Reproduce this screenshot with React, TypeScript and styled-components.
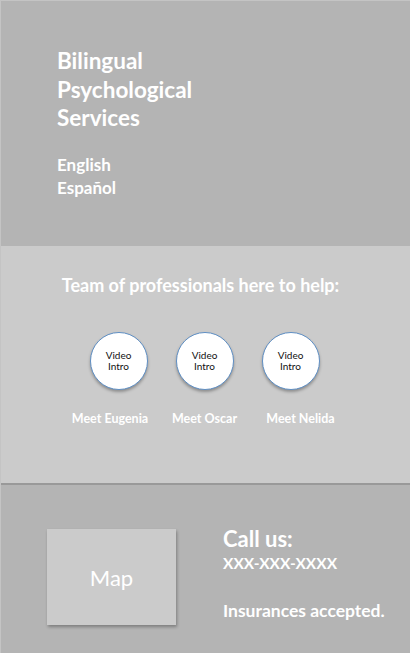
import React from "react";
import styled, { createGlobalStyle } from "styled-components";

const Global = createGlobalStyle`
  html, body { margin: 0; padding: 0; background: #b4b4b4; }
  body { font-family: Lato, "Open Sans", sans-serif; }
`;

const Page = styled.div`
  width: 410px;
  height: 653px;
  display: flex;
  flex-direction: column;
  overflow: hidden;
  border-top: 1px solid #c4c4c4;
  border-left: 1px solid #c4c4c4;
  box-sizing: border-box;
`;

const Hero = styled.header`
  height: 245px;
  flex-shrink: 0;
  background: #b4b4b4;
  padding: 46px 0 0 56px;
  box-sizing: border-box;
  color: #ffffff;
`;

const Title = styled.h1`
  margin: 0;
  font-size: 22.5px;
  line-height: 28.5px;
  font-weight: 700;
  width: 170px;
`;

const LangList = styled.div`
  margin-top: 20px;
  display: flex;
  flex-direction: column;
`;

const Lang = styled.span`
  font-size: 17px;
  line-height: 23px;
  font-weight: 700;
`;

const Team = styled.section`
  height: 239px;
  flex-shrink: 0;
  background: #cbcbcb;
  border-bottom: 2px solid #999999;
  box-sizing: border-box;
  display: flex;
  flex-direction: column;
  align-items: center;
  padding-top: 28px;
  color: #ffffff;
`;

const TeamTitle = styled.h2`
  margin: 0 0 0 -10px;
  font-size: 18px;
  line-height: 22px;
  font-weight: 700;
`;

const Members = styled.div`
  margin-top: 36px;
  display: flex;
  margin-left: -2px;
`;

const Member = styled.div`
  width: 86px;
  display: flex;
  flex-direction: column;
  align-items: center;
`;

const Circle = styled.div`
  width: 56px;
  height: 56px;
  border-radius: 50%;
  background: #ffffff;
  border: 1.5px solid #5f8fc4;
  box-shadow: 0 2px 3px rgba(0, 0, 0, 0.3);
  display: flex;
  align-items: center;
  justify-content: center;
  text-align: center;
  color: #111;
  font-size: 10px;
  line-height: 11px;
`;

const MemberName = styled.span<{ $shift: number }>`
  margin-top: 21px;
  margin-left: ${(p) => p.$shift}px;
  font-size: 12.5px;
  font-weight: 700;
  white-space: nowrap;
`;

const Contact = styled.footer`
  flex: 1;
  background: #b4b4b4;
  display: flex;
  align-items: flex-start;
  padding: 44px 0 0 46px;
  box-sizing: border-box;
  color: #ffffff;
`;

const MapBox = styled.div`
  width: 129px;
  height: 96px;
  background: #cbcbcb;
  box-shadow: 1px 2px 3px rgba(0, 0, 0, 0.3);
  display: flex;
  align-items: center;
  justify-content: center;
  font-size: 22px;
`;

const Info = styled.div`
  margin-left: 47px;
  margin-top: -2px;
  display: flex;
  flex-direction: column;
`;

const CallTitle = styled.span`
  font-size: 22px;
  line-height: 24px;
  font-weight: 700;
`;

const Phone = styled.span`
  font-size: 15.5px;
  line-height: 22px;
  margin-top: 1px;
  font-weight: 700;
`;

const Note = styled.span`
  margin-top: 26px;
  font-size: 17.5px;
  line-height: 22px;
  font-weight: 700;
`;

const members = [
  { name: "Meet Eugenia", shift: -17 },
  { name: "Meet Oscar", shift: 0 },
  { name: "Meet Nelida", shift: 20 },
];

export default function App() {
  return (
    <>
      <Global />
      <Page>
        <Hero>
          <Title>Bilingual Psychological Services</Title>
          <LangList>
            <Lang>English</Lang>
            <Lang>Español</Lang>
          </LangList>
        </Hero>
        <Team>
          <TeamTitle>Team of professionals here to help:</TeamTitle>
          <Members>
            {members.map((m) => (
              <Member key={m.name}>
                <Circle>
                  Video
                  <br />
                  Intro
                </Circle>
                <MemberName $shift={m.shift}>{m.name}</MemberName>
              </Member>
            ))}
          </Members>
        </Team>
        <Contact>
          <MapBox>Map</MapBox>
          <Info>
            <CallTitle>Call us:</CallTitle>
            <Phone>XXX-XXX-XXXX</Phone>
            <Note>Insurances accepted.</Note>
          </Info>
        </Contact>
      </Page>
    </>
  );
}
